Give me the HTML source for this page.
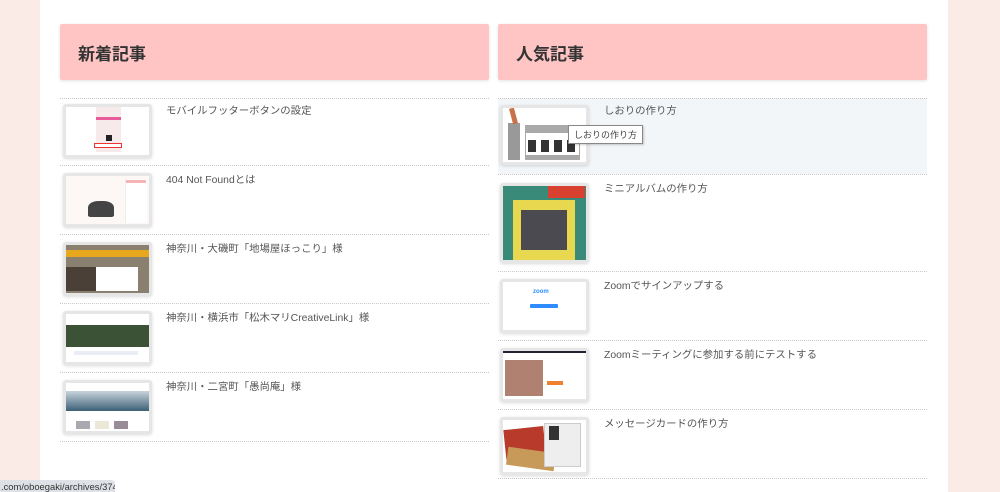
<!DOCTYPE html>
<html><head><meta charset="utf-8"><style>
*{margin:0;padding:0;box-sizing:border-box}
body{width:1000px;height:492px;overflow:hidden;background:#faebe6;font-family:"Liberation Sans","Noto Sans CJK JP",sans-serif;position:relative}
.main{position:absolute;left:40px;top:0;width:908px;height:492px;background:#fff}
.hd{position:absolute;top:24px;height:56px;background:#ffc4c4;box-shadow:0 1px 3px rgba(0,0,0,.12);border-radius:2px}
.hd span{position:absolute;left:18px;top:16px;font-size:17px;font-weight:bold;color:#333}
.sep{position:absolute;height:0;border-top:1px dotted #c8c8c8}
.th{position:absolute;width:89px;background:#e6e6e6;border-radius:3px;box-shadow:0 1px 3px rgba(0,0,0,.15);padding:3px}
.th div{width:100%;height:100%;background:#fff;position:relative;overflow:hidden}
.t{position:absolute;font-size:10.4px;color:#555;white-space:nowrap}
.hl{position:absolute;left:498px;top:98px;width:429px;height:76px;background:#f3f6f9}
.tip{position:absolute;left:568px;top:125px;border:1px solid #888;background:#fff;font-size:9px;color:#444;padding:2px 5px;box-shadow:1px 1px 2px rgba(0,0,0,.2)}
.st{position:absolute;left:0;top:480px;width:115px;height:12px;background:#dee1e6;border-top-right-radius:4px;font-size:9.4px;color:#333;padding-left:1px;line-height:13px;white-space:nowrap;overflow:hidden}
</style></head><body>
<div class="main"></div>
<div class="hd" style="left:60px;width:429px"><span>新着記事</span></div>
<div class="hd" style="left:498px;width:429px"><span>人気記事</span></div>

<div class="sep" style="left:60px;width:429px;top:98px"></div>
<div class="sep" style="left:60px;width:429px;top:165px"></div>
<div class="sep" style="left:60px;width:429px;top:234px"></div>
<div class="sep" style="left:60px;width:429px;top:303px"></div>
<div class="sep" style="left:60px;width:429px;top:372px"></div>
<div class="sep" style="left:60px;width:429px;top:441px"></div>

<div class="th" style="left:63px;top:104px;height:54px"><div><div style="position:absolute;left:30px;top:0;width:25px;height:45px;background:#f6eaea"></div><div style="position:absolute;left:30px;top:10px;width:25px;height:3px;background:#e85a9a"></div><div style="position:absolute;left:40px;top:28px;width:6px;height:6px;background:#222"></div><div style="position:absolute;left:28px;top:36px;width:28px;height:5px;border:1px solid #e33"></div></div></div>
<div class="t" style="left:166px;top:102px">モバイルフッターボタンの設定</div>

<div class="th" style="left:63px;top:173px;height:54px"><div style="background:#fdf8f5"><div style="position:absolute;right:2px;top:3px;width:22px;height:44px;background:#fff;border-left:1px solid #eee"></div><div style="position:absolute;right:3px;top:4px;width:20px;height:3px;background:#f5b5b5"></div><div style="position:absolute;left:22px;top:25px;width:26px;height:16px;background:#444;border-radius:40% 40% 10% 10%"></div></div></div>
<div class="t" style="left:166px;top:171px">404 Not Foundとは</div>

<div class="th" style="left:63px;top:242px;height:54px"><div style="background:#8a8070"><div style="position:absolute;left:0;top:5px;width:100%;height:7px;background:#e8a81e"></div><div style="position:absolute;left:30px;top:22px;width:42px;height:24px;background:#fff"></div><div style="position:absolute;left:0;top:22px;width:30px;height:24px;background:#4a4038"></div></div></div>
<div class="t" style="left:166px;top:240px">神奈川・大磯町「地場屋ほっこり」様</div>

<div class="th" style="left:63px;top:311px;height:54px"><div><div style="position:absolute;left:0;top:11px;width:100%;height:22px;background:#3c5236"></div><div style="position:absolute;left:8px;top:37px;width:64px;height:4px;background:#e8eef4"></div></div></div>
<div class="t" style="left:166px;top:309px">神奈川・横浜市「松木マリCreativeLink」様</div>

<div class="th" style="left:63px;top:380px;height:54px"><div><div style="position:absolute;left:0;top:8px;width:100%;height:20px;background:linear-gradient(#c8d4dc,#3c6078)"></div><div style="position:absolute;left:10px;top:38px;width:14px;height:8px;background:#aaa8b0"></div><div style="position:absolute;left:29px;top:38px;width:14px;height:8px;background:#ece8d8"></div><div style="position:absolute;left:48px;top:38px;width:14px;height:8px;background:#988c98"></div></div></div>
<div class="t" style="left:166px;top:378px">神奈川・二宮町「愚尚庵」様</div>

<div class="hl"></div>
<div class="sep" style="left:498px;width:429px;top:98px"></div>
<div class="sep" style="left:498px;width:429px;top:174px"></div>
<div class="sep" style="left:498px;width:429px;top:271px"></div>
<div class="sep" style="left:498px;width:429px;top:340px"></div>
<div class="sep" style="left:498px;width:429px;top:409px"></div>
<div class="sep" style="left:498px;width:429px;top:478px"></div>

<div class="th" style="left:500px;top:105px;height:60px"><div><div style="position:absolute;left:5px;top:15px;width:12px;height:37px;background:#999"></div><div style="position:absolute;left:8px;top:0;width:5px;height:16px;background:#c8724a;transform:rotate(-15deg)"></div><div style="position:absolute;left:22px;top:17px;width:55px;height:35px;background:#aaa"></div><div style="position:absolute;left:23px;top:25px;width:53px;height:22px;background:#fff"></div><div style="position:absolute;left:25px;top:32px;width:48px;height:12px;background:repeating-linear-gradient(90deg,#333 0 8px,#fff 8px 13px)"></div></div></div>
<div class="t" style="left:604px;top:102px">しおりの作り方</div>
<div class="tip">しおりの作り方</div>

<div class="th" style="left:500px;top:183px;height:80px"><div style="background:#3a8a7a"><div style="position:absolute;left:10px;top:14px;width:62px;height:60px;background:#e8d850"></div><div style="position:absolute;left:18px;top:24px;width:46px;height:40px;background:#4a4a50"></div><div style="position:absolute;left:45px;top:0;width:37px;height:12px;background:#d84030"></div></div></div>
<div class="t" style="left:604px;top:180px">ミニアルバムの作り方</div>

<div class="th" style="left:500px;top:279px;height:54px"><div><div style="position:absolute;left:30px;top:7px;font-size:6px;color:#2d8cff;font-weight:bold">zoom</div><div style="position:absolute;left:27px;top:22px;width:28px;height:4px;background:#2d8cff;border-radius:1px"></div></div></div>
<div class="t" style="left:604px;top:277px">Zoomでサインアップする</div>

<div class="th" style="left:500px;top:348px;height:54px"><div><div style="position:absolute;left:0;top:0;width:100%;height:2px;background:#223"></div><div style="position:absolute;left:2px;top:9px;width:38px;height:36px;background:#b08070"></div><div style="position:absolute;left:44px;top:30px;width:16px;height:4px;background:#f08030"></div></div></div>
<div class="t" style="left:604px;top:346px">Zoomミーティングに参加する前にテストする</div>

<div class="th" style="left:500px;top:417px;height:58px"><div><div style="position:absolute;left:2px;top:8px;width:40px;height:34px;background:#b83a2a;transform:rotate(-6deg)"></div><div style="position:absolute;left:4px;top:30px;width:48px;height:18px;background:#c89a5a;transform:rotate(8deg)"></div><div style="position:absolute;left:41px;top:3px;width:37px;height:44px;background:#eee;border:1px solid #ccc"></div><div style="position:absolute;left:46px;top:6px;width:10px;height:14px;background:#333"></div></div></div>
<div class="t" style="left:604px;top:415px">メッセージカードの作り方</div>

<div class="st">.com/oboegaki/archives/374</div>
</body></html>
